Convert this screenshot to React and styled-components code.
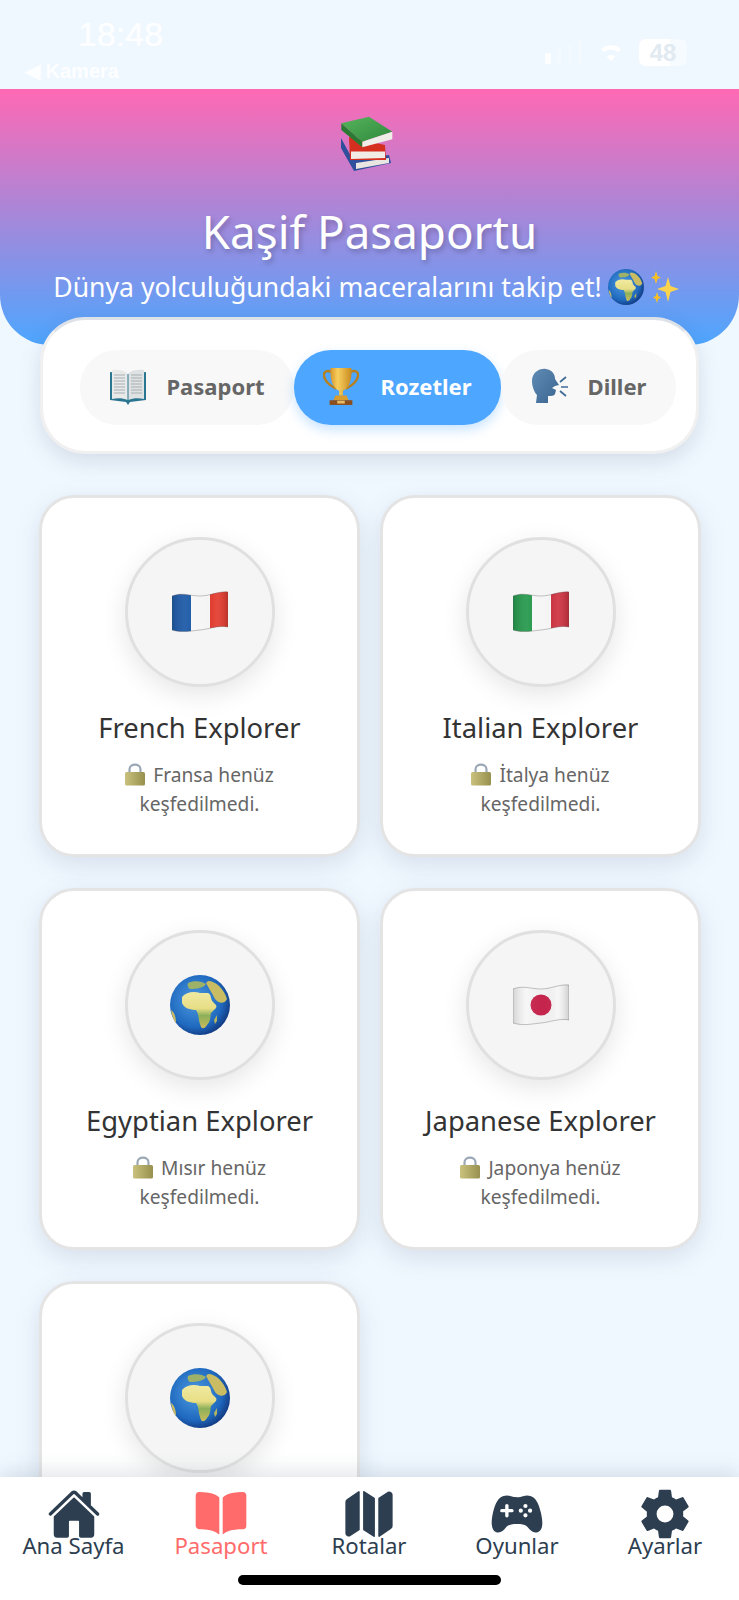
import React from 'react';
import styled, { createGlobalStyle } from 'styled-components';
import { IoHome, IoBook, IoMap, IoGameController, IoSettingsSharp } from 'react-icons/io5';

const Global = createGlobalStyle`
  html, body { margin: 0; padding: 0; background: #f0f8ff; }
  * { box-sizing: border-box; }
  body { font-family: "Noto Sans", "Open Sans", sans-serif; }
`;

const Page = styled.div`
  position: relative;
  width: 739px;
  height: 1600px;
  overflow: hidden;
  background: #f0f8ff;
`;
const StatusBar = styled.div`
  height: 89px;
  padding: 16px 0 0 25px;
  display: flex;
  justify-content: space-between;
  color: #fff;
`;
const StatusLeft = styled.div`
  display: flex;
  flex-direction: column;
  opacity: .9;
`;
const Clock = styled.div`
  font-family: "Liberation Sans", sans-serif;
  font-size: 34px;
  line-height: 36px;
  margin-left: 53px;
  text-shadow: 0 0 1px #fff;
`;
const Back = styled.div`
  font-family: "Liberation Sans", sans-serif;
  font-size: 20px;
  line-height: 22px;
  margin-top: 8px;
  font-weight: 700;
`;
const StatusRight = styled.div`
  display: flex;
  align-items: center;
  gap: 17px;
  margin: 17px 52px 0 0;
  height: 38px;
`;
const Battery = styled.div`
  width: 48px;
  height: 27px;
  border-radius: 7px;
  background: linear-gradient(90deg, #fff 65%, #f6fbff 65%);
  color: #e2eaf1;
  font: 700 24px/27px "Liberation Sans", sans-serif;
  text-align: center;
`;
const Header = styled.header`
  height: 256px;
  background: linear-gradient(180deg, #ff69b4 0%, #4da6ff 100%);
  border-radius: 0 0 50px 50px;
  display: flex;
  flex-direction: column;
  align-items: center;
  padding-top: 26px;
  color: #fff;
`;
const Title = styled.h1`
  margin: 25px 0 0;
  font-weight: 400;
  font-size: 45.700px;
  line-height: 62px;
  text-shadow: 2px 3px 5px rgba(0,0,0,.22);
`;
const Subtitle = styled.div`
  display: flex;
  align-items: center;
  gap: 6px;
  font-size: 26.600px;
  line-height: 36px;
  margin-top: 7px;
  padding-right: 6px;
  white-space: nowrap;
`;
const TabsCard = styled.nav`
  position: relative;
  margin: -28px 40px 0 40px;
  height: 137px;
  background: #fff;
  border: 3px solid #f0f0f0;
  border-top-color: #dde1e8;
  border-radius: 45px;
  box-shadow: 0 8px 22px rgba(40,60,90,.14);
  display: flex;
  align-items: center;
  padding: 4px 20px 0 37px;
`;
const Tab = styled.div`
  height: 75px;
  width: ${p => p.$w}px;
  padding-bottom: 3px;
  border-radius: 37px;
  background: ${p => p.$active ? '#4da6ff' : '#f8f8f8'};
  box-shadow: ${p => p.$active ? '0 5px 12px rgba(77,166,255,.3)' : 'none'};
  color: ${p => p.$active ? '#fff' : '#666'};
  display: flex;
  align-items: center;
  justify-content: center;
  gap: ${p => p.$gap}px;
  font-size: 22px;
  font-weight: 700;
`;
const Grid = styled.section`
  display: grid;
  grid-template-columns: 321px 321px;
  gap: 31px 20px;
  padding: 41px 38px 0 39px;
`;
const Card = styled.article`
  height: 362px;
  background: #fff;
  border: 3px solid #e4e4e4;
  border-radius: 35px;
  box-shadow: 0 8px 26px rgba(60,80,110,.14);
  display: flex;
  flex-direction: column;
  align-items: center;
  padding-top: 39px;
`;
const Circle = styled.div`
  width: 150px;
  height: 150px;
  flex: none;
  border-radius: 50%;
  background: #f5f5f5;
  border: 3px solid #e0e0e0;
  box-shadow: 0 8px 26px rgba(0,0,0,.1);
  display: flex;
  align-items: center;
  justify-content: center;
`;
const CardTitle = styled.h3`
  margin: 22px 0 0;
  font-weight: 400;
  font-size: 27.400px;
  line-height: 38px;
  color: #333;
  white-space: nowrap;
`;
const CardText = styled.p`
  margin: 14px 0 0;
  width: 240px;
  text-align: center;
  font-size: 19.200px;
  line-height: 28.500px;
  color: #666;
`;
const BottomNav = styled.footer`
  position: absolute;
  left: 0; right: 0; bottom: 0;
  height: 123px;
  background: #fff;
  box-shadow: 0 -6px 18px rgba(40,60,90,.13);
  display: grid;
  grid-template-columns: 147px 148px 148px 148px 148px;
  padding-top: 10px;
`;
const NavItem = styled.div`
  display: flex;
  flex-direction: column;
  align-items: center;
  color: ${p => p.$active ? '#ff6b6b' : '#2c3e50'};
  font-size: 22.200px;
  line-height: 26px;
  white-space: nowrap;
  & svg { display: block; margin-bottom: -8px; }
`;
const HomeBar = styled.div`
  position: absolute;
  left: 238px;
  bottom: 15px;
  width: 263px;
  height: 10px;
  border-radius: 5px;
  background: #000;
`;

const Books = ({ size = 60 }) => (
  <svg width={size} height={size} viewBox="0 0 60 60">
    <defs>
      <linearGradient id="greenBook" x1="0" y1="0" x2="1" y2="1">
        <stop offset="0" stopColor="#56b35c"/>
        <stop offset="1" stopColor="#2f8a3c"/>
      </linearGradient>
    </defs>
    <path d="M1 23 L13 45 L49 40 L51 48 L14 56 L1 33Z" fill="#2f4f9d"/>
    <path d="M16 48 L49 43 L49 48 L16 54Z" fill="#e9e6e2"/>
    <path d="M9 22 L45 30 L46 45 L10 45Z" fill="#d42f1f"/>
    <path d="M11 36.500 L45 36.500 L45 43 L11 44Z" fill="#f2ece6"/>
    <path d="M1.300 15 L22.300 32.300 L22.300 26.700 L1.300 8.300Z" fill="#2b7a34"/>
    <path d="M1.300 8.300 L29 1.700 L52.300 16.700 L22.300 26.700Z" fill="url(#greenBook)"/>
    <path d="M22.300 26.700 L52.300 16.700 L52.300 24.300 L22.300 32.300Z" fill="#f1eee9"/>
  </svg>
);
const OpenBook = () => (
  <svg width="38" height="38" viewBox="0 0 38 38">
    <path d="M1 5 L18 7 L20 7 L37 5 L37 33 L21 35 L19 38 L17 35 L1 33Z" fill="#2a7590"/>
    <path d="M3 3 C9 2 15 3 18.500 6 L18.500 33 C14 31 8 31 3 32Z" fill="#e8eaea"/>
    <path d="M35 3 C29 2 23 3 19.500 6 L19.500 33 C24 31 30 31 35 32Z" fill="#dfe2e3"/>
    <path d="M5 8H16M5 11H16M5 14H16M5 17H16M5 20H16M5 23H16M5 26H16M22 8H33M22 11H33M22 14H33M22 17H33M22 20H33M22 23H33M22 26H33" stroke="#a7aeb3" strokeWidth="1"/>
  </svg>
);
const Trophy = () => (
  <svg width="36" height="38" viewBox="0 0 38 40">
    <defs>
      <linearGradient id="gold" x1="0" y1="0" x2="1" y2="0">
        <stop offset="0" stopColor="#d9962a"/>
        <stop offset=".35" stopColor="#f7cf5e"/>
        <stop offset="1" stopColor="#c98a1f"/>
      </linearGradient>
    </defs>
    <path d="M9 5 C1 2 -1 8 3 14 C6 19 11 21 14 23" fill="none" stroke="#b8801c" strokeWidth="2.500"/>
    <path d="M29 5 C37 2 39 8 35 14 C32 19 27 21 24 23" fill="none" stroke="#b8801c" strokeWidth="2.500"/>
    <path d="M8 1 H30 C31 14 27 23 21 25 L21 30 H17 L17 25 C11 23 7 14 8 1Z" fill="url(#gold)"/>
    <path d="M13 30 H25 L27 35 H11Z" fill="#d99c2f"/>
    <rect x="7" y="35" width="24" height="5" fill="#8a4f1c"/>
    <rect x="15" y="35.500" width="8" height="3" fill="#e9bb60"/>
  </svg>
);
const Speaking = () => (
  <svg width="38" height="36" viewBox="0 0 38 36">
    <defs>
      <linearGradient id="head" x1="0" y1="0" x2="1" y2="1">
        <stop offset="0" stopColor="#5f8bb5"/>
        <stop offset="1" stopColor="#3a6590"/>
      </linearGradient>
    </defs>
    <path d="M1 13 C1 5 8 0 15 1 C21 2 24 6 24 11 L28 17 L24 18 L21 20 L25 22 L24 26 C23 28 20 28 17 28 L17 35 L5 35 L6 27 C3 24 1 18 1 13Z" fill="url(#head)"/>
    <path d="M29 14 L35 9M30 19 H37M29 23 L35 28" stroke="#3f6b96" strokeWidth="1.700" fill="none"/>
  </svg>
);
const FLAG_PATH = 'M0 5 C10 1 18 5 28 5 C38 5 46 0 56 1 L56 36 C46 34 38 38 28 39 C18 40 10 42 0 39Z';
const Flag = ({ children }) => (
  <svg width="56" height="42" viewBox="0 0 56 42">
    <defs>
      <clipPath id="flagShape"><path d={FLAG_PATH}/></clipPath>
      <linearGradient id="flagShade" x1="0" y1="0" x2="1" y2="0">
        <stop offset="0" stopColor="#000" stopOpacity=".14"/>
        <stop offset=".25" stopColor="#fff" stopOpacity=".06"/>
        <stop offset=".55" stopColor="#000" stopOpacity=".02"/>
        <stop offset=".8" stopColor="#fff" stopOpacity=".08"/>
        <stop offset="1" stopColor="#000" stopOpacity=".16"/>
      </linearGradient>
    </defs>
    <g clipPath="url(#flagShape)">
      {children}
      <rect width="56" height="42" fill="url(#flagShade)"/>
    </g>
    <path d={FLAG_PATH} fill="none" stroke="rgba(90,90,90,.35)" strokeWidth="1"/>
  </svg>
);
const France = () => (
  <Flag>
    <rect width="19" height="42" fill="#1d5aa8"/>
    <rect x="19" width="19" height="42" fill="#fbfbfb"/>
    <rect x="38" width="18" height="42" fill="#e43a2d"/>
  </Flag>
);
const Italy = () => (
  <Flag>
    <rect width="19" height="42" fill="#279a4e"/>
    <rect x="19" width="19" height="42" fill="#fbfbfb"/>
    <rect x="38" width="18" height="42" fill="#cf3140"/>
  </Flag>
);
const Japan = () => (
  <Flag>
    <rect width="56" height="42" fill="#f6f6f6"/>
    <circle cx="28" cy="21" r="10.500" fill="#c9254e"/>
  </Flag>
);
const Globe = ({ size = 60 }) => (
  <svg width={size} height={size} viewBox="0 0 60 60">
    <defs>
      <radialGradient id="sea" cx=".42" cy=".42" r=".62">
        <stop offset="0" stopColor="#4e9be0"/>
        <stop offset=".72" stopColor="#1f69bf"/>
        <stop offset="1" stopColor="#12387f"/>
      </radialGradient>
      <linearGradient id="africa" x1="0" y1="0" x2="0" y2="1">
        <stop offset="0" stopColor="#f0eaa2"/>
        <stop offset=".45" stopColor="#e8de86"/>
        <stop offset=".65" stopColor="#8cb05a"/>
        <stop offset="1" stopColor="#cbbc5c"/>
      </linearGradient>
    </defs>
    <circle cx="30" cy="30" r="30" fill="url(#sea)"/>
    <path d="M12 22 C16 17 24 16 30 18 L38 18 C42 20 40 24 43 27 C46 30 47 30 46 33 L41 38 C40 42 41 46 37 50 C34 55 31 54 30 49 C28 43 29 39 26 35 C20 35 14 33 12 28Z" fill="url(#africa)"/>
    <path d="M18 8 C24 5 32 6 36 9 C34 13 26 14 20 14 C18 13 17 10 18 8Z" fill="#9db268"/>
    <path d="M38 6 C46 6 54 14 57 24 C54 30 48 28 45 24 C42 18 38 12 36 8Z" fill="#c9bc62"/>
    <path d="M1 35 C3 36 6 40 6 48 C4 46 2 41 1 35Z" fill="#c9bc62"/>
    <path d="M44 45 L47 40 L47 46 L45 49Z" fill="#b4b45c"/>
  </svg>
);
const Sparkles = () => (
  <svg width="30" height="32" viewBox="0 0 30 32">
    <path d="M18 6 L20.500 15 L29 18 L20.500 21 L18 31 L15.500 21 L7 18 L15.500 15Z" fill="#fcd34d"/>
    <path d="M6 0 L7.500 5 L11 6.500 L7.500 8 L6 13 L4.500 8 L1 6.500 L4.500 5Z" fill="#fbbf24"/>
    <path d="M7 21 L8.300 25 L11 26.500 L8.300 28 L7 32 L5.700 28 L3 26.500 L5.700 25Z" fill="#fbbf24"/>
  </svg>
);
const LockIcon = styled.svg`
  vertical-align: -4px;
  margin-right: 8px;
`;
const Lock = () => (
  <LockIcon width="20" height="24" viewBox="0 0 20 24">
    <defs>
      <linearGradient id="lockBody" x1="0" y1="0" x2="1" y2="0">
        <stop offset="0" stopColor="#c9c17c"/>
        <stop offset="1" stopColor="#97904e"/>
      </linearGradient>
    </defs>
    <path d="M4.500 11 V7.500 C4.500 1 15.500 1 15.500 7.500 V11" fill="none" stroke="#9aa7b5" strokeWidth="2.200"/>
    <rect y="10" width="20" height="13.500" rx="1.500" fill="url(#lockBody)"/>
  </LockIcon>
);

const Wifi = () => (
  <svg width="22" height="18" viewBox="0 0 22 18" fill="#fff">
    <path d="M11 18 L7 13.500 C9 11.500 13 11.500 15 13.500Z"/>
    <path d="M1 6 C6.500 1 15.500 1 21 6 L18 9 C14 5.500 8 5.500 4 9Z"/>
  </svg>
);
const Signal = () => (
  <svg width="38" height="24" viewBox="0 0 38 24" fill="#fff">
    <rect x="0" y="13" width="6" height="11" rx="1.500" opacity=".8"/>
    <rect x="12" y="9" width="4" height="15" rx="1" opacity=".25"/>
    <rect x="23" y="5" width="4" height="19" rx="1" opacity=".15"/>
    <rect x="33" y="0" width="4" height="24" rx="1" opacity=".15"/>
  </svg>
);

const badges = [
  { t: 'French Explorer', a: 'Fransa henüz', i: <France /> },
  { t: 'Italian Explorer', a: 'İtalya henüz', i: <Italy /> },
  { t: 'Egyptian Explorer', a: 'Mısır henüz', i: <Globe /> },
  { t: 'Japanese Explorer', a: 'Japonya henüz', i: <Japan /> },
  { i: <Globe /> },
];

const navItems = [
  { l: 'Ana Sayfa', I: IoHome },
  { l: 'Pasaport', I: IoBook, active: true },
  { l: 'Rotalar', I: IoMap },
  { l: 'Oyunlar', I: IoGameController },
  { l: 'Ayarlar', I: IoSettingsSharp },
];

export default function App() {
  return (
    <Page>
      <Global />
      <StatusBar>
        <StatusLeft>
          <Clock>18:48</Clock>
          <Back>◀ Kamera</Back>
        </StatusLeft>
        <StatusRight>
          <Signal />
          <Wifi />
          <Battery>48</Battery>
        </StatusRight>
      </StatusBar>
      <Header>
        <Books />
        <Title>Kaşif Pasaportu</Title>
        <Subtitle>Dünya yolculuğundaki maceralarını takip et! <Globe size={36} /><Sparkles /></Subtitle>
      </Header>
      <TabsCard>
        <Tab $w={214} $gap={19}><OpenBook />Pasaport</Tab>
        <Tab $w={207} $gap={21} $active><Trophy />Rozetler</Tab>
        <Tab $w={175} $gap={19}><Speaking />Diller</Tab>
      </TabsCard>
      <Grid>
        {badges.map((b, n) => (
          <Card key={n}>
            <Circle>{b.i}</Circle>
            {b.t && <CardTitle>{b.t}</CardTitle>}
            {b.a && <CardText><Lock />{b.a} keşfedilmedi.</CardText>}
          </Card>
        ))}
      </Grid>
      <BottomNav>
        {navItems.map(({ l, I, active }) => (
          <NavItem key={l} $active={active}>
            <I size={54} />
            <span>{l}</span>
          </NavItem>
        ))}
      </BottomNav>
      <HomeBar />
    </Page>
  );
}
